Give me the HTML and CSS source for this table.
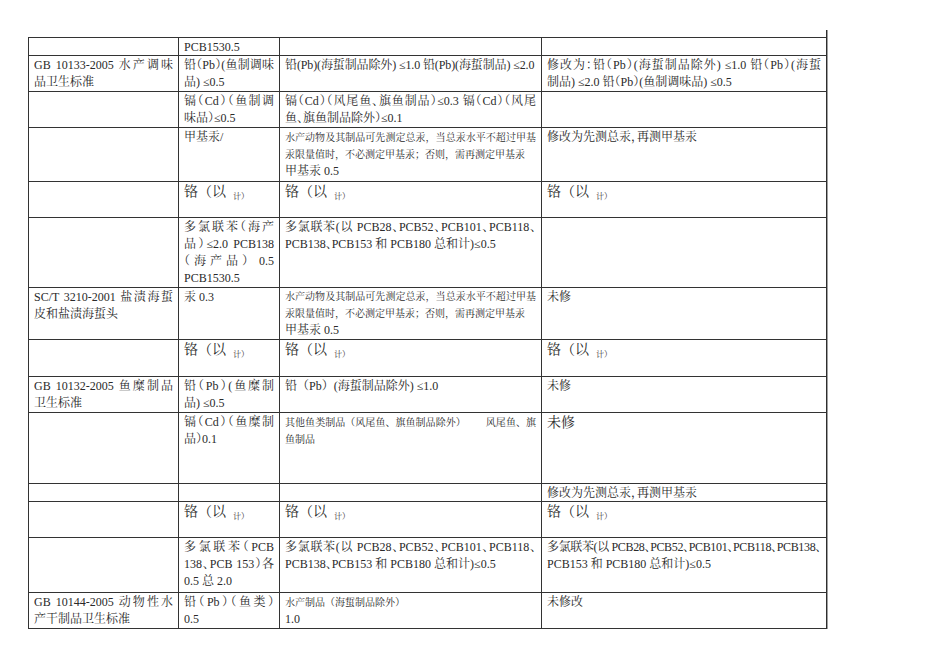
FILE: index.html
```html
<!DOCTYPE html>
<html lang="zh-CN">
<head>
<meta charset="utf-8">
<title>水产品限量标准修改对照</title>
<link rel="stylesheet" href="styles.css">
</head>
<body>
<div class="sheet">
<table class="grid">
<colgroup><col class="c1"><col class="c2"><col class="c3"><col class="c4"></colgroup>
<tr class="h18 l16"><td></td><td>PCB1530.5</td><td></td><td></td></tr>
<tr class="h36">
<td><span class="jl">GB 10133-2005 水产调味</span>品卫生标准</td>
<td><span class="jl">铅（Pb）(鱼制调味</span>品) ≤0.5</td>
<td><span class="one snug">铅(Pb)(海蜇制品除外) ≤1.0 铅(Pb)(海蜇制品) ≤2.0</span></td>
<td><span class="jl">修改为：铅（Pb）(海蜇制品除外) ≤1.0 铅（Pb）(海蜇</span>制品) ≤2.0 铅（Pb）(鱼制调味品) ≤0.5</td>
</tr>
<tr class="h36">
<td></td>
<td><span class="jl">镉（Cd）（鱼制调</span>味品）≤0.5</td>
<td><span class="jl">镉（Cd）（风尾鱼、旗鱼制品）≤0.3 镉（Cd）（风尾</span>鱼、旗鱼制品除外）≤0.1</td>
<td></td>
</tr>
<tr class="h54">
<td></td>
<td>甲基汞/</td>
<td><span class="sm jl">水产动物及其制品可先测定总汞，当总汞水平不超过甲基</span><span class="sm one">汞限量值时，不必测定甲基汞；否则，需再测定甲基汞</span>甲基汞 0.5</td>
<td>修改为先测总汞，再测甲基汞</td>
</tr>
<tr class="h36">
<td></td>
<td><span class="big">铬（以</span><span class="sub">计）</span></td>
<td><span class="big">铬（以</span><span class="sub">计）</span></td>
<td><span class="big">铬（以</span><span class="sub">计）</span></td>
</tr>
<tr class="h70">
<td></td>
<td><span class="jl">多氯联苯（海产</span><span class="jl">品）≤2.0 PCB138</span><span class="jl">（海产品） 0.5</span>PCB1530.5</td>
<td><span class="jl">多氯联苯(以 PCB28、PCB52、PCB101、PCB118、</span>PCB138、PCB153 和 PCB180 总和计)≤0.5</td>
<td></td>
</tr>
<tr class="h52 l165">
<td><span class="jl">SC/T 3210-2001 盐渍海蜇</span>皮和盐渍海蜇头</td>
<td>汞 0.3</td>
<td><span class="sm jl">水产动物及其制品可先测定总汞，当总汞水平不超过甲基</span><span class="sm one">汞限量值时，不必测定甲基汞；否则，需再测定甲基汞</span>甲基汞 0.5</td>
<td>未修</td>
</tr>
<tr class="h37">
<td></td>
<td><span class="big">铬（以</span><span class="sub">计）</span></td>
<td><span class="big">铬（以</span><span class="sub">计）</span></td>
<td><span class="big">铬（以</span><span class="sub">计）</span></td>
</tr>
<tr class="h36">
<td><span class="jl">GB 10132-2005 鱼糜制品</span>卫生标准</td>
<td><span class="jl">铅（Pb）(鱼糜制</span>品) ≤0.5</td>
<td class="fw">铅（Pb）(海蜇制品除外) ≤1.0</td>
<td>未修</td>
</tr>
<tr class="h71">
<td></td>
<td><span class="jl">镉（Cd）（鱼糜制</span>品）0.1</td>
<td><span class="sm jl">其他鱼类制品（风尾鱼、旗鱼制品除外）&emsp;&emsp;风尾鱼、旗</span><span class="sm one">鱼制品</span></td>
<td><span class="big">未修</span></td>
</tr>
<tr class="h18 l16">
<td></td><td></td><td></td>
<td>修改为先测总汞，再测甲基汞</td>
</tr>
<tr class="h36">
<td></td>
<td><span class="big">铬（以</span><span class="sub">计）</span></td>
<td><span class="big">铬（以</span><span class="sub">计）</span></td>
<td><span class="big">铬（以</span><span class="sub">计）</span></td>
</tr>
<tr class="h55">
<td></td>
<td><span class="jl">多氯联苯（PCB</span><span class="jl">138、PCB 153）各</span>0.5 总 2.0</td>
<td><span class="jl">多氯联苯(以 PCB28、PCB52、PCB101、PCB118、</span>PCB138、PCB153 和 PCB180 总和计)≤0.5</td>
<td><span class="jl tight">多氯联苯(以 PCB28、PCB52、PCB101、PCB118、PCB138、</span>PCB153 和 PCB180 总和计)≤0.5</td>
</tr>
<tr class="h36">
<td><span class="jl">GB 10144-2005 动物性水</span>产干制品卫生标准</td>
<td><span class="jl">铅（Pb）（鱼类）</span>0.5</td>
<td><span class="sm one">水产制品（海蜇制品除外）</span>1.0</td>
<td>未修改</td>
</tr>
</table>
</div>
</body>
</html>
```

FILE: styles.css
```css
html, body {
  margin: 0;
  padding: 0;
  background: #ffffff;
}

body {
  font-family: "Liberation Serif", "Noto Serif CJK SC", "Noto Sans CJK SC", serif;
  font-size: 12px;
  color: #2a2a2a;
}

.sheet {
  margin: 30px 0 0 28px;
  padding-top: 7px;
  width: max-content;
  border-right: 1px solid #2e2e2e;
  box-shadow: 1px 0 0 #a0a0a0;
}

.grid {
  border-collapse: collapse;
  table-layout: fixed;
}

.c1 { width: 150px; }
.c2 { width: 101px; }
.c3 { width: 262px; }
.c4 { width: 284px; }

.grid td {
  border: 1px solid #333333;
  padding: 1px 5px 0;
  vertical-align: top;
  line-height: 17px;
  font-feature-settings: "halt";
}

.grid tr.l16 td {
  line-height: 16px;
}

.grid tr.l165 td {
  line-height: 16.5px;
}

.grid td:last-child {
  border-right: none;
}

.grid td.fw {
  font-feature-settings: normal;
}

.h18 { height: 18px; }
.h36 { height: 36px; }
.h37 { height: 37px; }
.h52 { height: 52px; }
.h54 { height: 54px; }
.h55 { height: 55px; }
.h70 { height: 70px; }
.h71 { height: 71px; }

.jl {
  display: block;
  white-space: nowrap;
  text-align: justify;
  text-align-last: justify;
}

.one {
  display: block;
  white-space: nowrap;
}

.snug {
  letter-spacing: -0.12px;
}

.tight {
  letter-spacing: -0.35px;
}

.sm {
  font-size: 10px;
  font-feature-settings: normal;
}

.big {
  font-size: 14px;
  font-feature-settings: normal;
}

.sub {
  font-size: 8px;
  margin-left: 7px;
  vertical-align: -3px;
  font-feature-settings: normal;
}
```
